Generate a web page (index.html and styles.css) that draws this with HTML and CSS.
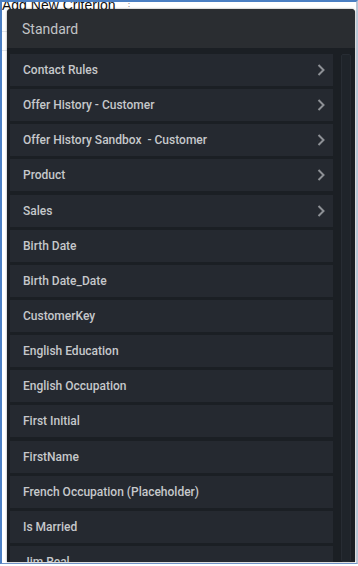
FILE: index.html
```html
<!DOCTYPE html>
<html lang="en">
<head>
  <meta charset="UTF-8" />
  <title>Add New Criterion</title>
  <link rel="stylesheet" href="styles.css">
</head>
<body>
  <div class="frame">
    <div class="page-head">
      <span class="page-title">Add New Criterion</span>
      <span class="page-menu">&#8942;</span>
    </div>
    <div class="page-rule"></div>
    <div class="page-rule"></div>

    <!-- Dropdown -->
    <div class="picker">
      <div class="picker-head">Standard</div>
      <div class="picker-body">
        <ul class="field-list">
          <li class="field">Contact Rules<svg class="chev" viewBox="0 0 8 12"><polyline points="1.5,1 6.5,6 1.5,11"/></svg></li>
          <li class="field">Offer History - Customer<svg class="chev" viewBox="0 0 8 12"><polyline points="1.5,1 6.5,6 1.5,11"/></svg></li>
          <li class="field">Offer History Sandbox&nbsp; - Customer<svg class="chev" viewBox="0 0 8 12"><polyline points="1.5,1 6.5,6 1.5,11"/></svg></li>
          <li class="field">Product<svg class="chev" viewBox="0 0 8 12"><polyline points="1.5,1 6.5,6 1.5,11"/></svg></li>
          <li class="field">Sales<svg class="chev" viewBox="0 0 8 12"><polyline points="1.5,1 6.5,6 1.5,11"/></svg></li>
          <li class="field">Birth Date</li>
          <li class="field">Birth Date_Date</li>
          <li class="field">CustomerKey</li>
          <li class="field">English Education</li>
          <li class="field">English Occupation</li>
          <li class="field">First Initial</li>
          <li class="field">FirstName</li>
          <li class="field">French Occupation (Placeholder)</li>
          <li class="field">Is Married</li>
          <li class="field">Jim Real</li>
          <li class="field">Last Name</li>
        </ul>
        <div class="scroll-track"></div>
      </div>
    </div>
  </div>
</body>
</html>
```

FILE: styles.css
```css
body {
  margin: 0;
  background: #ffffff;
  font-family: Roboto, 'Liberation Sans', sans-serif;
}

.frame {
  position: relative;
  width: 358px;
  height: 564px;
  box-sizing: border-box;
  border-top: 2px solid #4b7fc3;
  border-left: 2px solid #4b7fc3;
  border-bottom: 1px solid #6f93c8;
  border-right: 2px solid #b9c6d6;
  overflow: hidden;
}

.page-head {
  display: flex;
  align-items: flex-start;
  gap: 8px;
  margin-top: -5px;
}

.page-title {
  font-family: 'Liberation Sans', Arial, sans-serif;
  font-size: 14px;
  color: #111;
}

.page-menu {
  font-size: 10px;
  color: #999;
  margin-top: 4px;
}

.page-rule {
  height: 1px;
  width: 12px;
  background: #e2e5ea;
  margin-top: 18px;
}

.picker {
  position: absolute;
  left: 5px;
  top: 7px;
  width: 348px;
  height: 553px;
  display: flex;
  flex-direction: column;
  background: #1b1f24;
  border-radius: 4px 4px 0 0;
  box-shadow: 0 0 2px rgba(0, 0, 0, 0.5);
  overflow: hidden;
}

.picker-head {
  height: 39px;
  flex-shrink: 0;
  display: flex;
  align-items: center;
  padding-left: 15px;
  background: #2a2d31;
  color: #c2c4c7;
  font-size: 14px;
}

.picker-body {
  flex: 1;
  display: flex;
  gap: 8px;
  padding: 6px 3px 0 3px;
  overflow: hidden;
}

.field-list {
  list-style: none;
  margin: 0;
  padding: 0;
  width: 323px;
  display: flex;
  flex-direction: column;
  gap: 3.15px;
}

.field {
  height: 32px;
  flex-shrink: 0;
  display: flex;
  align-items: center;
  justify-content: space-between;
  padding: 0 8px 0 13px;
  background: #252930;
  color: #c6c8cb;
  font-size: 12px;
  font-weight: 500;
}

.chev {
  width: 8px;
  height: 12px;
  fill: none;
  stroke: #8d9095;
  stroke-width: 2;
}

.scroll-track {
  width: 10px;
  box-sizing: border-box;
  background: #1f242a;
  border: 1px solid #272c33;
  border-radius: 2px;
}
```
